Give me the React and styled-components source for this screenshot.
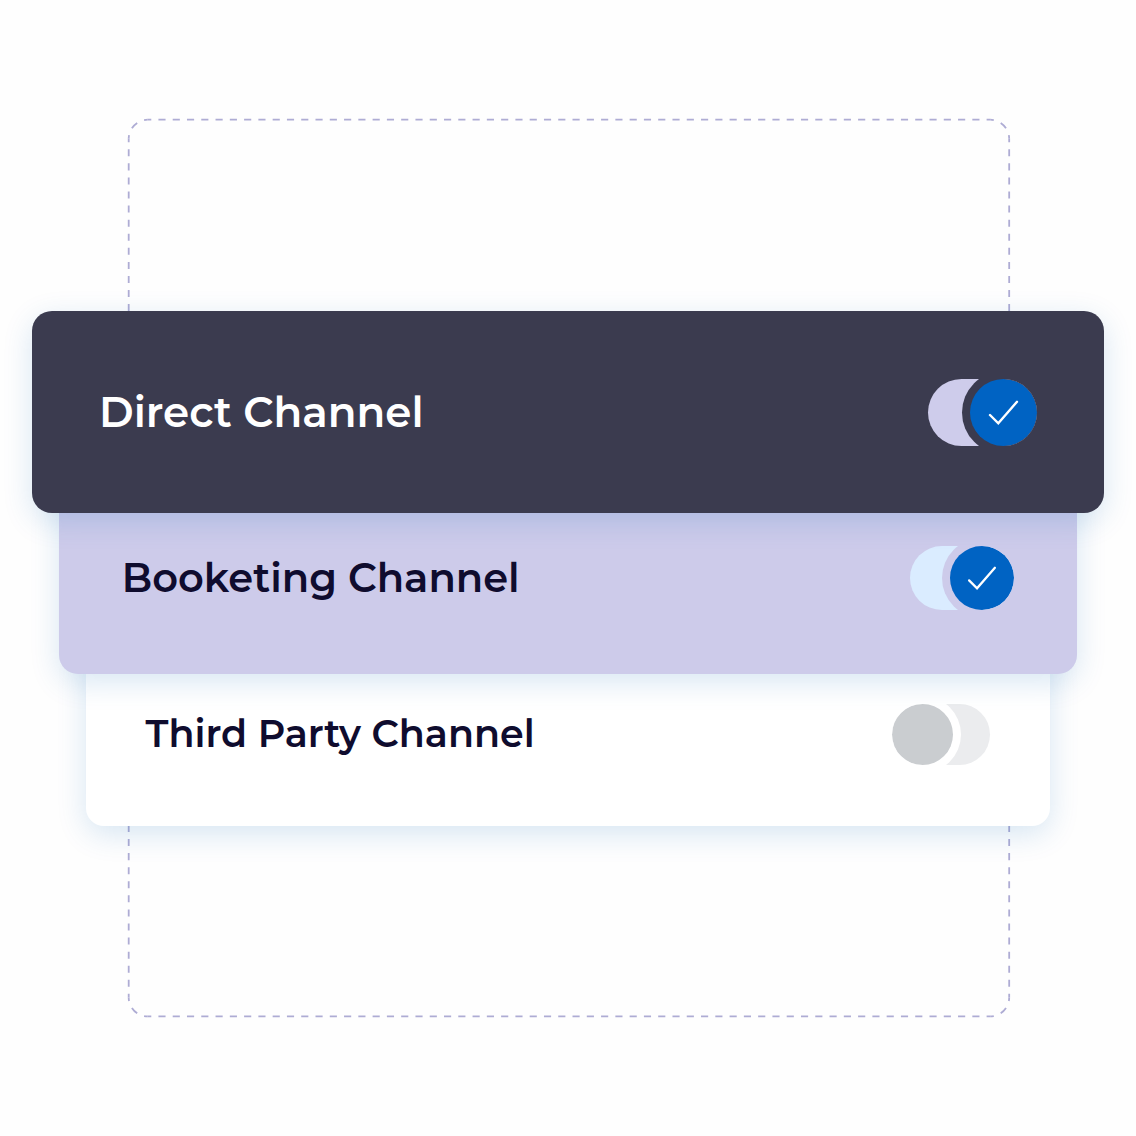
import React, { useState } from 'react';
import styled, { createGlobalStyle } from 'styled-components';

const channelList = [
  {
    id: 'direct',
    name: 'Direct Channel',
    enabled: true,
    width: '100%',
    overlap: 0,
    padding: '68px 67px 67px',
    radius: 20,
    fontSize: 42,
    background: '#3b3b4f',
    color: '#ffffff',
    track: '#cecceb',
    toggle: { width: 109, height: 67 },
  },
  {
    id: 'booketing',
    name: 'Booketing Channel',
    enabled: true,
    width: '95%',
    overlap: 31,
    padding: '64px 63px',
    radius: 19,
    fontSize: 40,
    background: '#cdcbea',
    color: '#0f0c2e',
    track: '#daecff',
    toggle: { width: 104, height: 64 },
  },
  {
    id: 'third-party',
    name: 'Third Party Channel',
    enabled: false,
    width: '90%',
    overlap: 30,
    padding: '60px 60px 61px',
    radius: 18,
    fontSize: 38,
    background: '#ffffff',
    color: '#0f0c2e',
    track: '#ebecee',
    toggle: { width: 98, height: 61 },
  },
];

const Switch = ({ channel }) => {
  const [on, setOn] = useState(channel.enabled);
  const { width, height } = channel.toggle;

  return (
    <Track $width={width} $height={height} $color={channel.track} $on={on}>
      <Checkbox
        type="checkbox"
        id={channel.id}
        checked={on}
        onChange={(e) => setOn(e.target.checked)}
      />
      <Knob $size={height} $on={on} $ring={channel.background}>
        {on && (
          <svg viewBox="0 0 67 67" aria-hidden="true">
            <path d="M20 36L28.3 44.3L47 22.8" />
          </svg>
        )}
      </Knob>
    </Track>
  );
};

// each side and corner is dashed on its own, so they all meet in the middle of a dash
const DashedFrame = () => (
  <Frame viewBox="0 0 884 900" aria-hidden="true">
    <path pathLength="59" d="M21.7 1.7H863.8" />
    <path pathLength="2" d="M863.8 1.7A19 19 0 0 1 882.8 20.7" />
    <path pathLength="61" d="M882.8 20.7V879" />
    <path pathLength="2" d="M882.8 879A19 19 0 0 1 863.8 898" />
    <path pathLength="59" d="M863.8 898H21.7" />
    <path pathLength="2" d="M21.7 898A19 19 0 0 1 2.7 879" />
    <path pathLength="61" d="M2.7 879V20.7" />
    <path pathLength="2" d="M2.7 20.7A19 19 0 0 1 21.7 1.7" />
  </Frame>
);

const App = () => {
  return (
    <>
      <GlobalStyle />
      <Page>
        <DashedFrame />
        <Stack>
          {channelList.map((channel, index) => (
            <Card key={channel.id} $channel={channel} $layer={channelList.length - index}>
              <Name htmlFor={channel.id} $size={channel.fontSize}>
                {channel.name}
              </Name>
              <Switch channel={channel} />
            </Card>
          ))}
        </Stack>
      </Page>
    </>
  );
};

const GlobalStyle = createGlobalStyle`
  * {
    box-sizing: border-box;
  }

  body {
    margin: 0;
    background: #fefefe;
    font-family: Montserrat, Inter, "Liberation Sans", sans-serif;
  }
`;

const Page = styled.main`
  min-height: 100vh;
  padding: 32px;
  display: grid;
  grid-template-columns: minmax(0, 1fr);
  align-items: center;
  justify-items: center;

  > * {
    grid-area: 1 / 1;
  }
`;

const Frame = styled.svg`
  display: block;
  width: 82.5%;
  overflow: visible;
  fill: none;
  stroke: #aeacd4;
  stroke-width: 1.8;
  stroke-dasharray: 0.5 0.5;
  stroke-dashoffset: 0.25;
`;

const Stack = styled.section`
  width: 100%;
  display: flex;
  flex-direction: column;
  align-items: center;
`;

const Card = styled.div`
  position: relative;
  z-index: ${({ $layer }) => $layer};
  width: ${({ $channel }) => $channel.width};
  margin-top: -${({ $channel }) => $channel.overlap}px;
  padding: ${({ $channel }) => $channel.padding};
  display: flex;
  align-items: center;
  justify-content: space-between;
  border-radius: ${({ $channel }) => $channel.radius}px;
  background: ${({ $channel }) => $channel.background};
  color: ${({ $channel }) => $channel.color};
  box-shadow: 0 8px 30px rgba(0, 100, 180, 0.16);
`;

const Name = styled.label`
  font-size: ${({ $size }) => $size}px;
  font-weight: 600;
  line-height: 48px;
  cursor: pointer;
`;

const Track = styled.span`
  position: relative;
  flex: none;
  display: flex;
  justify-content: ${({ $on }) => ($on ? 'flex-end' : 'flex-start')};
  width: ${({ $width }) => $width}px;
  height: ${({ $height }) => $height}px;
  border-radius: 34px;
  background: ${({ $color }) => $color};
  overflow: hidden;
`;

const Checkbox = styled.input`
  position: absolute;
  inset: 0;
  z-index: 1;
  width: 100%;
  height: 100%;
  margin: 0;
  opacity: 0;
  cursor: pointer;
`;

const Knob = styled.span`
  width: ${({ $size }) => $size}px;
  height: ${({ $size }) => $size}px;
  border-radius: 50%;
  background: ${({ $on }) => ($on ? '#0063c3' : '#cacdd0')};
  box-shadow: 0 0 0 8px ${({ $ring }) => $ring};

  svg {
    display: block;
    width: 100%;
    fill: none;
    stroke: #ffffff;
    stroke-width: 2.4;
    stroke-linecap: round;
  }
`;

export default App;
